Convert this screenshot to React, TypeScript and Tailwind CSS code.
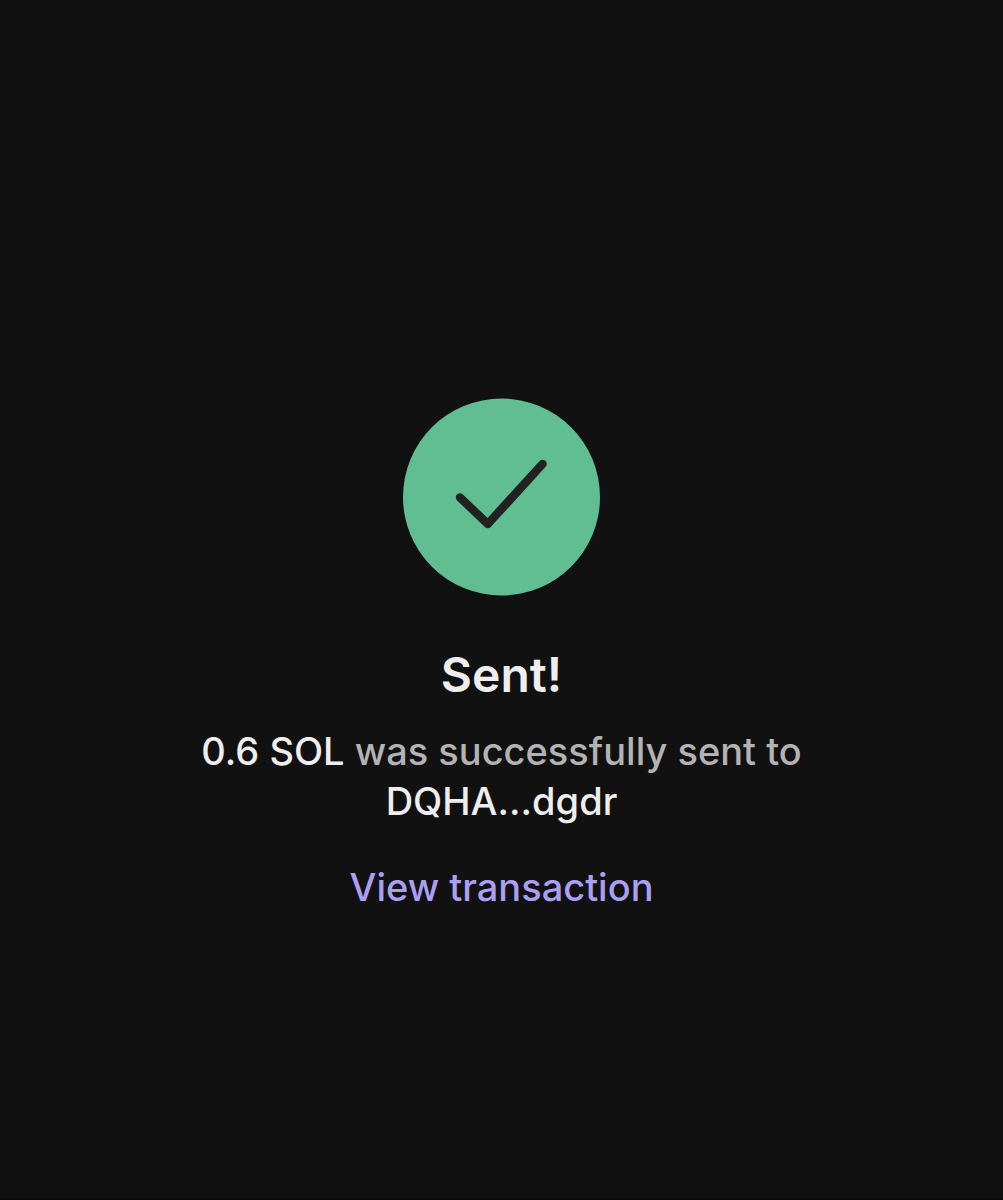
export default function App() {
  return (
    <main className="flex min-h-screen flex-col items-center border-b-2 border-[#0d090d] bg-[#111111] px-6 pt-[398px] text-center font-['Inter',sans-serif] font-medium text-[#eeeeee]">
      <svg viewBox="0 0 197 198" className="h-[198px] w-[197px]" fill="none" aria-hidden="true">
        <circle cx="98.5" cy="99" r="98.5" fill="#60be92" />
        <path d="M57 99.500L84.800 126L139.500 66" stroke="#222222" strokeWidth="8.500" strokeLinecap="round" strokeLinejoin="round" />
      </svg>
      <h1 className="mt-[49px] text-[48px] leading-[60px] font-semibold">Sent!</h1>
      <p className="mt-[21px] max-w-[640px] text-[38px] leading-[50px] text-[#b3b3b3]">
        <span className="text-[#eeeeee]">0.6 SOL</span> was successfully sent to{" "}
        <span className="text-[#eeeeee]">DQHA...dgdr</span>
      </p>
      <a href="#transaction" className="mt-9 text-[38px] leading-[50px] text-[#ab9ff2]">
        View transaction
      </a>
    </main>
  );
}
